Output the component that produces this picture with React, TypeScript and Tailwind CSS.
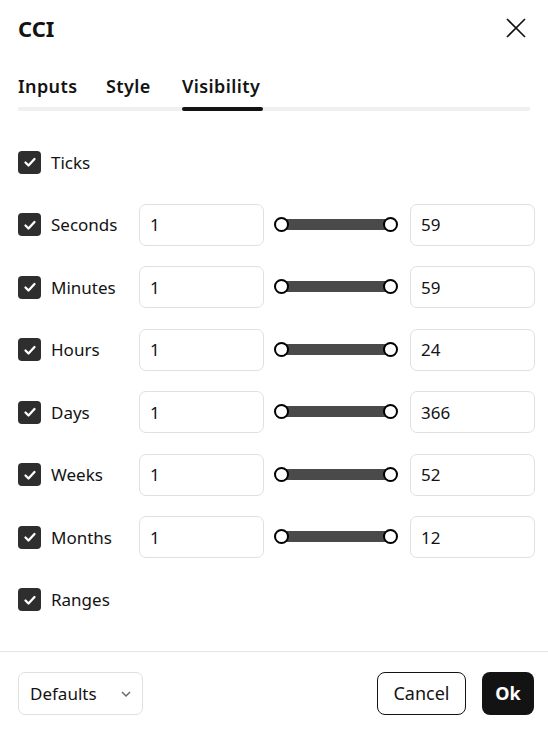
import { useState } from "react";

type Row = { label: string; from?: string; to?: string };

const rows: Row[] = [
  { label: "Ticks" },
  { label: "Seconds", from: "1", to: "59" },
  { label: "Minutes", from: "1", to: "59" },
  { label: "Hours", from: "1", to: "24" },
  { label: "Days", from: "1", to: "366" },
  { label: "Weeks", from: "1", to: "52" },
  { label: "Months", from: "1", to: "12" },
  { label: "Ranges" },
];

const tabs = [
  { name: "Inputs", w: "w-[58px]" },
  { name: "Style", w: "w-[46px]" },
  { name: "Visibility", w: "w-[81px]" },
];

function Check() {
  return (
    <div className="flex h-[23px] w-[23px] shrink-0 items-center justify-center rounded-[4px] bg-[#2e2e2e]">
      <svg width="14" height="14" viewBox="0 0 14 14" fill="none">
        <path d="M2.5 7.5l3 3 6-6.5" stroke="white" strokeWidth="2.3" strokeLinecap="round" strokeLinejoin="round" />
      </svg>
    </div>
  );
}

function Slider() {
  return (
    <div className="relative ml-[10px] mr-[12px] h-[42px] w-[124px] shrink-0">
      <div className="absolute left-[6px] right-[6px] top-[15px] h-[11px] bg-[#4a4a4a]" />
      <div className="absolute left-0 top-[13px] h-[15px] w-[15px] rounded-full border-2 border-black bg-white" />
      <div className="absolute right-0 top-[13px] h-[15px] w-[15px] rounded-full border-2 border-black bg-white" />
    </div>
  );
}

function Field({ value }: { value: string }) {
  return (
    <div className="flex h-[42px] w-[125px] shrink-0 items-center rounded-[7px] border border-[#e0e0e0] px-[10px] text-[17px] text-[#131313]">
      {value}
    </div>
  );
}

export default function App() {
  const [tab] = useState("Visibility");
  return (
    <div
      className="flex h-[732px] w-[548px] flex-col bg-white text-[#131313]"
      style={{ fontFamily: '"Noto Sans", "Open Sans", sans-serif' }}
    >
      <div className="flex items-center justify-between pl-[18px] pr-[21px] pt-[12px]">
        <div className="text-[22px] font-bold leading-[32px]">CCI</div>
        <svg width="22" height="22" viewBox="0 0 22 22">
          <path d="M2 2l18 18M20 2L2 20" stroke="#131313" strokeWidth="1.6" />
        </svg>
      </div>

      <div className="ml-[18px] mr-[18px] mt-[29px] border-b-[4px] border-[#f0f0f0]">
        <div className="flex gap-[30px]">
          {tabs.map((t) => (
            <div
              key={t.name}
              className={`relative ${t.w} whitespace-nowrap pb-[8px] text-[18px] font-semibold leading-[26px] tracking-[0.4px]`}
            >
              {t.name}
              {t.name === tab && (
                <div className="absolute -bottom-[4px] left-0 right-0 h-[4px] rounded-full bg-[#131313]" />
              )}
            </div>
          ))}
        </div>
      </div>

      <div className="flex flex-1 flex-col pl-[18px] pr-[14px] pt-[20px]">
        {rows.map((r) => (
          <div key={r.label} className="flex h-[62.5px] items-center">
            {r.from ? (
              <>
                <div className="flex w-[121px] shrink-0 items-center gap-[10px]">
                  <Check />
                  <span className="text-[17px]">{r.label}</span>
                </div>
                <Field value={r.from} />
                <Slider />
                <Field value={r.to!} />
              </>
            ) : (
              <div className="flex h-[42px] items-center gap-[10px]">
                <Check />
                <span className="text-[17px]">{r.label}</span>
              </div>
            )}
          </div>
        ))}
      </div>

      <div className="flex items-center justify-between border-t border-[#e6e6e6] pb-[17px] pl-[18px] pr-[14px] pt-[20px]">
        <div className="flex h-[43px] w-[125px] items-center justify-between rounded-[7px] border border-[#e0e0e0] pl-[11px] pr-[9px] text-[17px]">
          Defaults
          <svg width="14" height="14" viewBox="0 0 14 14" fill="none">
            <path d="M3 5l4 4 4-4" stroke="#6a6a6a" strokeWidth="1.5" />
          </svg>
        </div>
        <div className="flex gap-[16px]">
          <button className="h-[43px] w-[89px] rounded-[8px] border border-[#131313] text-[18px]">Cancel</button>
          <button className="h-[43px] w-[52px] rounded-[8px] bg-[#131313] text-[18px] font-bold text-white">Ok</button>
        </div>
      </div>
    </div>
  );
}
